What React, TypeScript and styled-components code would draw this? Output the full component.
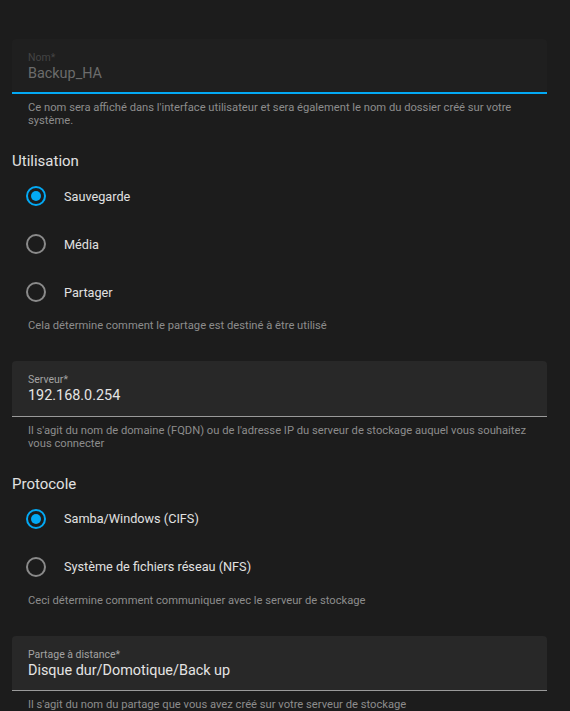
import React from 'react';
import styled, {createGlobalStyle} from 'styled-components';

const GlobalStyle = createGlobalStyle`
  html, body {
    margin: 0;
    padding: 0;
    background: #1c1c1c;
    font-family: Roboto, "Noto Sans", sans-serif;
    -webkit-font-smoothing: antialiased;
  }
`;

const Page = styled.div`
  display: flex;
  flex-direction: column;
  width: 570px;
  height: 711px;
  overflow: hidden;
  box-sizing: border-box;
  padding: 39px 23px 0 12px;
  background: #1c1c1c;
`;

const Field = styled.div<{$disabled?: boolean}>`
  box-sizing: border-box;
  height: 56px;
  display: flex;
  flex-direction: column;
  padding: 12px 16px 0 16px;
  border-radius: 4px 4px 0 0;
  background: ${(p) => (p.$disabled ? '#1f1f1f' : '#282828')};
  border-bottom: ${(p) => (p.$disabled ? '2px solid #03a9f4' : '1px solid #9a9a9a')};
`;

const FieldLabel = styled.span<{$disabled?: boolean}>`
  font-size: 10.5px;
  line-height: 13px;
  color: ${(p) => (p.$disabled ? '#444444' : '#a3a3a3')};
`;

const FieldValue = styled.span<{$disabled?: boolean}>`
  font-size: 14.4px;
  line-height: 19px;
  color: ${(p) => (p.$disabled ? '#6c6c6c' : '#e4e4e4')};
`;

const Helper = styled.div<{$top?: number}>`
  margin-top: ${(p) => p.$top ?? 7}px;
  padding: 0 16px;
  font-size: 11.2px;
  line-height: 13px;
  color: #8c8c8c;
`;

const Heading = styled.div`
  margin-top: 24px;
  font-size: 15px;
  line-height: 20px;
  color: #e1e1e1;
`;

const RadioGroup = styled.div`
  display: flex;
  flex-direction: column;
  margin-top: 1px;
`;

const RadioRow = styled.label`
  height: 48px;
  display: flex;
  align-items: center;
  gap: 18px;
  padding-left: 14px;
  font-size: 12.7px;
  color: #e1e1e1;
`;

const RadioCircle = styled.span<{$checked?: boolean}>`
  box-sizing: border-box;
  width: 20px;
  height: 20px;
  border-radius: 50%;
  border: 2px solid ${(p) => (p.$checked ? '#03a9f4' : '#8a8a8a')};
  display: flex;
  align-items: center;
  justify-content: center;
  &::after {
    content: '';
    width: 10px;
    height: 10px;
    border-radius: 50%;
    background: ${(p) => (p.$checked ? '#03a9f4' : 'transparent')};
  }
`;

const Spacer = styled.div<{$h: number}>`
  height: ${(p) => p.$h}px;
  flex-shrink: 0;
`;

const Radio = ({label, checked}: {label: string; checked?: boolean}) => (
  <RadioRow>
    <RadioCircle $checked={checked} />
    {label}
  </RadioRow>
);

export default function App() {
  return (
    <Page>
      <GlobalStyle />
      <Field $disabled>
        <FieldLabel $disabled>Nom*</FieldLabel>
        <FieldValue $disabled>Backup_HA</FieldValue>
      </Field>
      <Helper>
        Ce nom sera affiché dans l'interface utilisateur et sera également le nom du dossier créé sur votre
        système.
      </Helper>

      <Heading>Utilisation</Heading>
      <RadioGroup>
        <Radio label="Sauvegarde" checked />
        <Radio label="Média" />
        <Radio label="Partager" />
      </RadioGroup>
      <Helper $top={3}>Cela détermine comment le partage est destiné à être utilisé</Helper>

      <Spacer $h={29} />
      <Field>
        <FieldLabel>Serveur*</FieldLabel>
        <FieldValue>192.168.0.254</FieldValue>
      </Field>
      <Helper>
        Il s'agit du nom de domaine (FQDN) ou de l'adresse IP du serveur de stockage auquel vous souhaitez vous
        connecter
      </Helper>

      <Heading>Protocole</Heading>
      <RadioGroup>
        <Radio label="Samba/Windows (CIFS)" checked />
        <Radio label="Système de fichiers réseau (NFS)" />
      </RadioGroup>
      <Helper $top={3}>Ceci détermine comment communiquer avec le serveur de stockage</Helper>

      <Spacer $h={29} />
      <Field>
        <FieldLabel>Partage à distance*</FieldLabel>
        <FieldValue>Disque dur/Domotique/Back up</FieldValue>
      </Field>
      <Helper>Il s'agit du nom du partage que vous avez créé sur votre serveur de stockage</Helper>
    </Page>
  );
}
